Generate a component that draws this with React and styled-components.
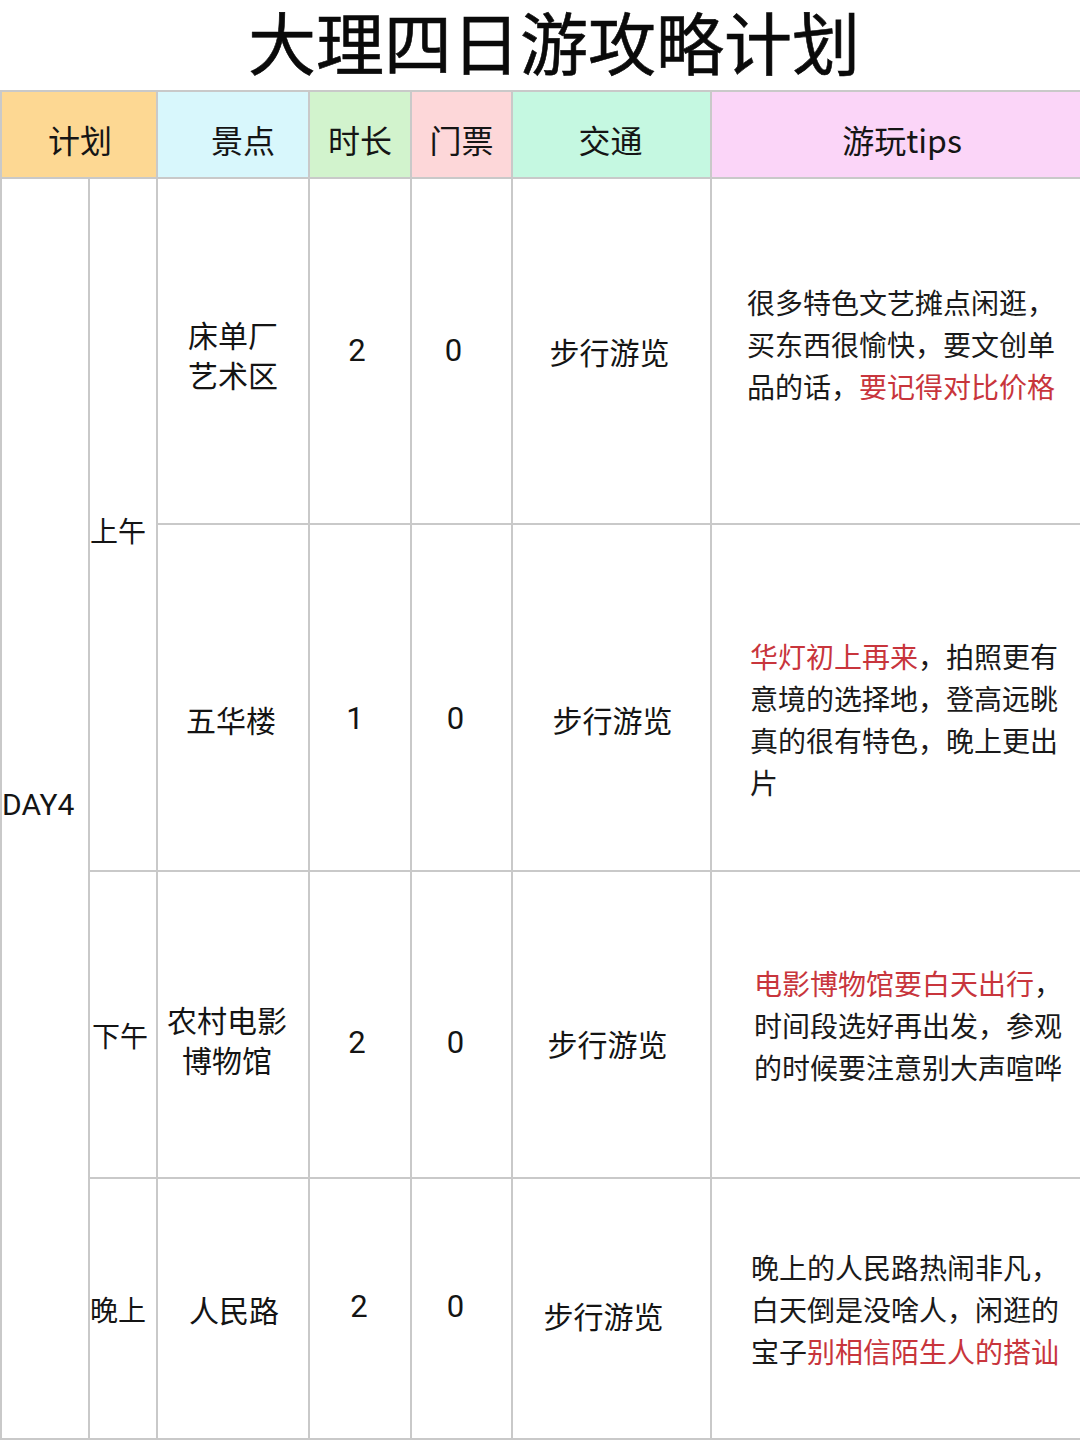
import React from "react";
import styled, { createGlobalStyle } from "styled-components";

const Global = createGlobalStyle`
  html, body { margin: 0; padding: 0; background: #fff; }
  body { font-family: "Noto Sans CJK SC", "Noto Sans", sans-serif; color: #141414; }
`;

const Page = styled.div`
  width: 1080px;
  height: 1440px;
  overflow: hidden;
  background: #fff;
`;

const Title = styled.h1`
  margin: 0;
  height: 90px;
  display: flex;
  align-items: center;
  justify-content: center;
  line-height: 1.15;
  font-size: 68px;
  font-weight: 400;
  color: #0a0a0a;
  padding: 0 0 8px 28px;
  box-sizing: border-box;
  -webkit-text-stroke: 0.6px #0a0a0a;
`;

const Table = styled.table`
  width: 1080px;
  border-collapse: collapse;
  table-layout: fixed;
`;

const HeadRow = styled.tr`
  height: 87px;
`;

const Head = styled.th`
  padding: 8px ${(p) => (p.$dx < 0 ? -2 * p.$dx : 0)}px 0 ${(p) => (p.$dx > 0 ? 2 * p.$dx : 0)}px;
  background: ${(p) => p.$bg};
  border: 2px solid #c9c9c9;
  font-size: 32px;
  font-weight: 400;
  color: #151515;
  text-align: center;
  vertical-align: middle;
`;

const Row = styled.tr`
  height: ${(p) => p.$h}px;
`;

const Cell = styled.td`
  border: 2px solid #c9c9c9;
  padding: ${(p) => (p.$dy > 0 ? 2 * p.$dy : 0)}px
    ${(p) => (p.$dx < 0 ? -2 * p.$dx : 0)}px
    ${(p) => (p.$dy < 0 ? -2 * p.$dy : 0)}px
    ${(p) => (p.$dx > 0 ? 2 * p.$dx : 0)}px;
  vertical-align: middle;
  text-align: center;
  font-size: 30px;
  line-height: 40px;
  color: #141414;
  white-space: nowrap;
`;

const SideCell = styled(Cell)`
  text-align: left;
  font-size: 28px;
  padding-left: ${(p) => p.$pl || 0}px;
  padding-right: 0;
`;

const DayCell = styled(SideCell)`
  font-family: Roboto, "Noto Sans CJK SC", sans-serif;
  font-size: 30px;
  padding-left: 0;
`;

const NumCell = styled(Cell)`
  font-family: Roboto, "Noto Sans", sans-serif;
  font-size: 31px;
`;

const TipCell = styled(Cell)`
  text-align: left;
  padding-right: 0;
`;

const TipText = styled.div`
  font-size: 28px;
  line-height: 42px;
  padding-left: ${(p) => p.$pl}px;
  white-space: nowrap;
  color: #1a1a1a;
`;

const Red = styled.span`
  color: #c8353c;
`;

const rows = [
  {
    h: 346,
    spot: ["床单厂", "艺术区"],
    dur: "2",
    spotPos: [0, 3],
    durPos: [-3, 0],
    ticketPos: [-8, 0],
    trafficPos: [-2, 0],
    tipDy: -7,
    tipPl: 35,
    tips: [
      ["很多特色文艺摊点闲逛，"],
      ["买东西很愉快，要文创单"],
      ["品的话，", <Red key="r">要记得对比价格</Red>],
    ],
  },
  {
    h: 347,
    spot: ["五华楼"],
    dur: "1",
    spotPos: [-2, 21],
    durPos: [-5, 21],
    ticketPos: [-6, 21],
    trafficPos: [1, 21],
    tipDy: 21,
    tipPl: 38,
    tips: [
      [<Red key="r">华灯初上再来</Red>, "，拍照更有"],
      ["意境的选择地，登高远眺"],
      ["真的很有特色，晚上更出"],
      ["片"],
    ],
  },
  {
    h: 307,
    spot: ["农村电影", "博物馆"],
    dur: "2",
    spotPos: [-6, 14],
    durPos: [-3, 18],
    ticketPos: [-6, 18],
    trafficPos: [-4, 18],
    tipDy: 0,
    tipPl: 42,
    tips: [
      [<Red key="r">电影博物馆要白天出行</Red>, "，"],
      ["时间段选好再出发，参观"],
      ["的时候要注意别大声喧哗"],
    ],
  },
  {
    h: 261,
    spot: ["人民路"],
    dur: "2",
    spotPos: [1, 0],
    durPos: [-1, -2],
    ticketPos: [-6, -2],
    trafficPos: [-8, 6],
    tipDy: 0,
    tipPl: 39,
    tips: [
      ["晚上的人民路热闹非凡，"],
      ["白天倒是没啥人，闲逛的"],
      ["宝子", <Red key="r">别相信陌生人的搭讪</Red>],
    ],
  },
];

const periods = {
  0: { text: "上午", span: 2, dy: 5, pl: 0 },
  2: { text: "下午", span: 1, dy: 10, pl: 2 },
  3: { text: "晚上", span: 1, dy: 0, pl: 0 },
};

export default function App() {
  return (
    <Page>
      <Global />
      <Title>大理四日游攻略计划</Title>
      <Table>
        <colgroup>
          <col style={{ width: 88 }} />
          <col style={{ width: 68 }} />
          <col style={{ width: 152 }} />
          <col style={{ width: 102 }} />
          <col style={{ width: 101 }} />
          <col style={{ width: 199 }} />
          <col style={{ width: 370 }} />
        </colgroup>
        <thead>
          <HeadRow>
            <Head colSpan={2} $bg="#fdd893" $dx={1}>计划</Head>
            <Head $bg="#d8f7fc" $dx={10}>景点</Head>
            <Head $bg="#d2f3cd" $dx={0}>时长</Head>
            <Head $bg="#fdd7d9" $dx={0}>门票</Head>
            <Head $bg="#c5f8e1" $dx={-1}>交通</Head>
            <Head $bg="#fbd5f8" $dx={6}>游玩tips</Head>
          </HeadRow>
        </thead>
        <tbody>
          {rows.map((r, i) => (
            <Row key={i} $h={r.h}>
              {i === 0 && (
                <DayCell rowSpan={4} $dy={-4}>
                  DAY4
                </DayCell>
              )}
              {periods[i] && (
                <SideCell rowSpan={periods[i].span} $dy={periods[i].dy} $pl={periods[i].pl}>
                  {periods[i].text}
                </SideCell>
              )}
              <Cell $dx={r.spotPos[0]} $dy={r.spotPos[1]}>
                {r.spot.map((s, k) => (
                  <div key={k}>{s}</div>
                ))}
              </Cell>
              <NumCell $dx={r.durPos[0]} $dy={r.durPos[1]}>{r.dur}</NumCell>
              <NumCell $dx={r.ticketPos[0]} $dy={r.ticketPos[1]}>0</NumCell>
              <Cell $dx={r.trafficPos[0]} $dy={r.trafficPos[1]}>步行游览</Cell>
              <TipCell $dy={r.tipDy}>
                <TipText $pl={r.tipPl}>
                  {r.tips.map((line, k) => (
                    <div key={k}>{line}</div>
                  ))}
                </TipText>
              </TipCell>
            </Row>
          ))}
        </tbody>
      </Table>
    </Page>
  );
}
